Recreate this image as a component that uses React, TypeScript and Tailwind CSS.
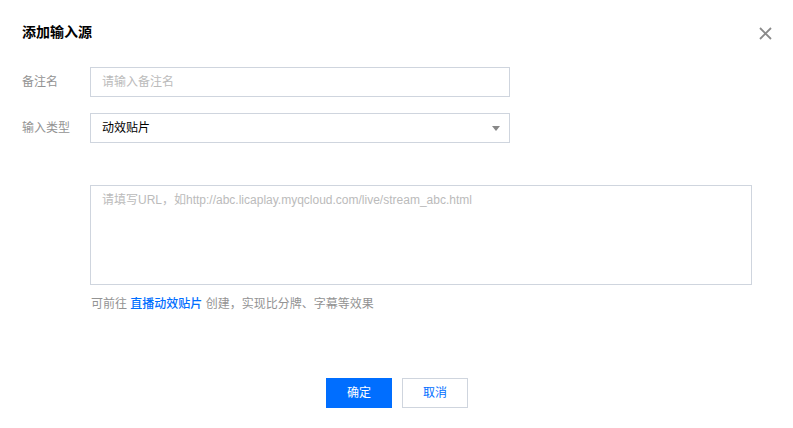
import React from 'react';

const font = { fontFamily: '"Liberation Sans", "Noto Sans CJK SC", sans-serif' };

const App = () => (
  <div className="relative w-[793px] h-[428px] bg-white text-[12px] text-[#000]" style={font}>
    <div className="px-[22px] pt-[24px]">
      <div className="flex items-center justify-between h-[16px]">
        <h1 className="text-[14px] font-bold leading-[16px] text-[#000]">添加输入源</h1>
        <button className="mr-[-1px] mt-[2px]" aria-label="close">
          <svg width="13" height="13" viewBox="0 0 13 13">
            <path d="M1 1L12 12M12 1L1 12" stroke="#8a8a8a" strokeWidth="1.8" />
          </svg>
        </button>
      </div>

      <div className="mt-[27px] flex flex-col gap-[16px]">
        <div className="flex items-center h-[30px]">
          <label className="w-[68px] text-[#939393]">备注名</label>
          <div className="w-[420px] h-[30px] border border-[#cfd5de] flex items-center px-[11px] text-[#bbb]">
            请输入备注名
          </div>
        </div>
        <div className="flex items-center h-[30px]">
          <label className="w-[68px] text-[#939393]">输入类型</label>
          <div className="w-[420px] h-[30px] border border-[#cfd5de] flex items-center justify-between pl-[11px] pr-[9px] text-[#000]">
            <span>动效贴片</span>
            <svg width="8" height="5" viewBox="0 0 8 5">
              <path d="M0 0H8L4 5Z" fill="#888" />
            </svg>
          </div>
        </div>
      </div>

      <div className="pl-[68px] mt-[42px]">
        <div className="w-[662px] h-[100px] border border-[#cfd5de] px-[11px] pt-[5px] text-[#bbb]">
          请填写URL，如http://abc.licaplay.myqcloud.com/live/stream_abc.html
        </div>
        <p className="mt-[10px] ml-[1px] text-[#939393]">
          可前往 <span className="text-[#006eff] font-medium">直播动效贴片</span> 创建，实现比分牌、字幕等效果
        </p>
      </div>

      <div className="mt-[65px] flex justify-center gap-[10px] pl-[1px]">
        <button className="w-[66px] h-[30px] bg-[#006eff] text-white">确定</button>
        <button className="w-[66px] h-[30px] border border-[#cfd5de] text-[#006eff] bg-white">取消</button>
      </div>
    </div>
  </div>
);

export default App;
